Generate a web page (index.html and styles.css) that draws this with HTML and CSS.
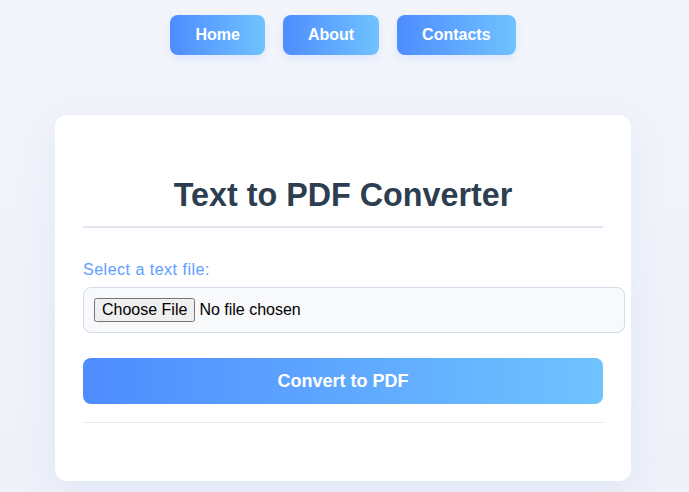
FILE: index.html
```html
<!DOCTYPE html>
<html lang="en">
<head>
<meta charset="utf-8">
<title>Text to PDF Converter</title>
<link rel="stylesheet" href="styles.css">
</head>
<body>
  <nav class="nav">
    <a class="nav-btn" href="#">Home</a>
    <a class="nav-btn" href="#">About</a>
    <a class="nav-btn" href="#">Contacts</a>
  </nav>
  <main class="card">
    <h1 class="title">Text to PDF Converter</h1>
    <label class="label" for="file">Select a text file:</label>
    <input class="file" id="file" type="file">
    <button class="convert" type="button">Convert to PDF</button>
    <div class="result"></div>
  </main>
</body>
</html>
```
FILE: styles.css
```css
* { box-sizing: content-box; }
html, body { margin: 0; padding: 0; }
body {
  font-family: "Liberation Sans", Arial, sans-serif;
  background: linear-gradient(180deg, #f3f5fb 0%, #eef1f9 100%);
  min-height: 492px;
  padding-right: 3px;
}
.nav {
  display: flex;
  justify-content: center;
  gap: 18px;
  padding-top: 15px;
}
.nav-btn {
  display: block;
  height: 40px;
  line-height: 40px;
  padding: 0 25px;
  border-radius: 8px;
  background: linear-gradient(90deg, #4e8cff, #6fc3ff);
  color: #fff;
  font-weight: bold;
  font-size: 16px;
  text-decoration: none;
  box-shadow: 0 4px 10px rgba(78, 140, 255, 0.12);
}
.card {
  display: block;
  width: 520px;
  margin: 60px auto 0;
  padding: 40px 28px 58px;
  background: #fff;
  border-radius: 12px;
  box-shadow: 0 10px 40px rgba(70, 100, 200, 0.08);
}
.title {
  margin: 22px 0 0;
  padding-bottom: 12px;
  border-bottom: 2px solid #e1e6f0;
  text-align: center;
  font-size: 32.3px;
  font-weight: bold;
  color: #2c3e50;
}
.label {
  display: block;
  margin-top: 33px;
  font-size: 16px;
  letter-spacing: 0.5px;
  color: #5e9dff;
}
.file {
  display: block;
  width: 100%;
  height: 24px;
  margin-top: 8px;
  padding: 10px;
  border: 1px solid #d3dbe8;
  border-radius: 8px;
  background: #f8f9fb;
  font-family: "Liberation Sans", Arial, sans-serif;
  font-size: 16px;
}
.convert {
  display: block;
  width: 100%;
  height: 46px;
  margin-top: 25px;
  border: 0;
  border-radius: 8px;
  background: linear-gradient(90deg, #4e8cff, #6fc3ff);
  color: #fff;
  font-family: "Liberation Sans", Arial, sans-serif;
  font-size: 18px;
  font-weight: bold;
  padding: 0;
}
.result {
  margin-top: 18px;
  border-top: 1px solid #e3e8f0;
}
```
